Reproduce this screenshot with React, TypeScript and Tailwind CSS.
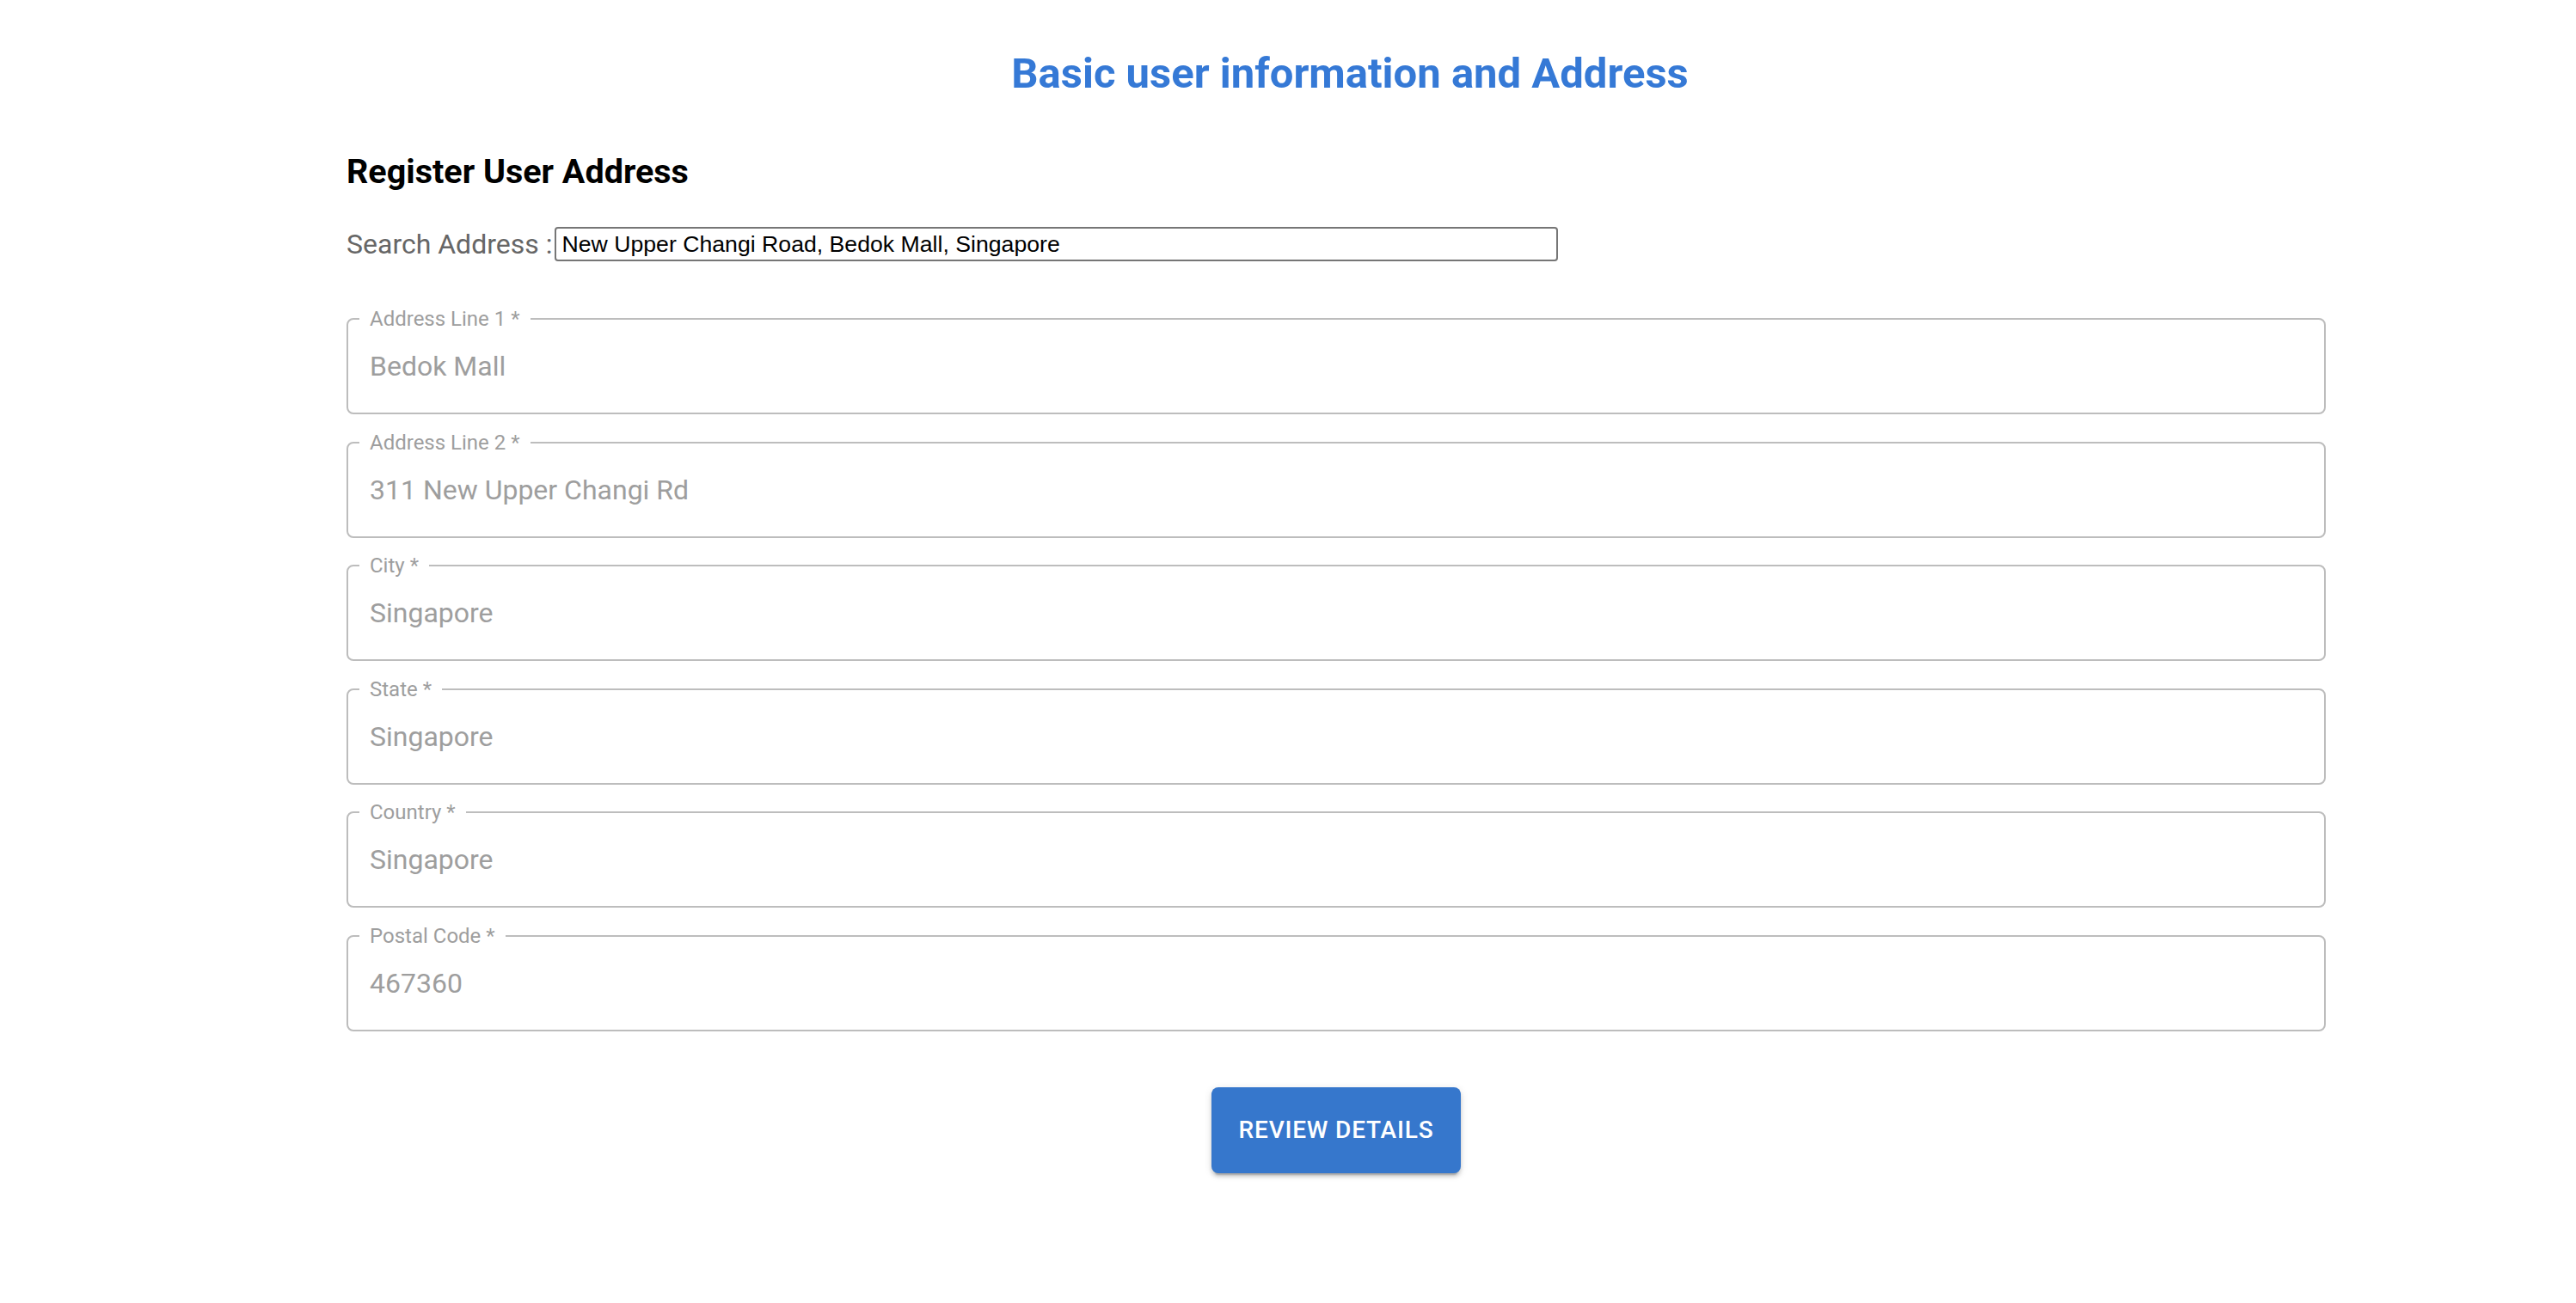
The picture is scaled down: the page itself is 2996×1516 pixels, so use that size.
import React, { useState } from "react";

interface AddressField {
  label: string;
  value: string;
}

const fields: AddressField[] = [
  { label: "Address Line 1", value: "Bedok Mall" },
  { label: "Address Line 2", value: "311 New Upper Changi Rd" },
  { label: "City", value: "Singapore" },
  { label: "State", value: "Singapore" },
  { label: "Country", value: "Singapore" },
  { label: "Postal Code", value: "467360" },
];

function OutlinedField({ label, value }: Readonly<AddressField>) {
  return (
    <div className="relative h-[112px] w-full rounded-[8px] border-2 border-[#bdbdbd] flex items-center pl-[25px] pr-[26px]">
      {/* Floating label sits on the border */}
      <span className="absolute left-[13px] top-[-13px] bg-white px-[12px] text-[24px] leading-[24px] text-[#9e9e9e] font-['Roboto',sans-serif] whitespace-nowrap">
        {label} *
      </span>
      <input
        disabled
        value={value}
        readOnly
        className="w-full bg-transparent outline-none text-[32px] leading-[46px] h-[46px] text-[#9e9e9e] font-['Roboto',sans-serif]"
      />
    </div>
  );
}

export default function App() {
  const [search, setSearch] = useState(
    "New Upper Changi Road, Bedok Mall, Singapore"
  );

  return (
    <div className="min-h-screen w-full bg-white pl-[403px] pr-[291px] pt-[57px] pb-[150px] font-['Roboto',sans-serif]">
      {/* Page title */}
      <div className="pl-[32px] text-center">
        <h2 className="text-[49px] leading-[58px] font-bold text-[#3579d6]">
          Basic user information and Address
        </h2>
      </div>

      <h3 className="mt-[61px] text-[39.5px] leading-[48px] font-bold text-black">
        Register User Address
      </h3>

      {/* Search */}
      <div className="mt-[40px] flex items-center h-[40px]">
        <span className="text-[32px] leading-[40px] text-[#666666] whitespace-pre">
          Search Address :
        </span>
        <input
          value={search}
          onChange={(e) => setSearch(e.target.value)}
          className="ml-[3px] w-[1167px] h-[40px] border-2 border-[#767676] rounded-[4px] px-[6px] text-[26.67px] text-black font-['Liberation_Sans',Arial,sans-serif] outline-none"
        />
      </div>

      {/* Address fields */}
      <div className="mt-[66px] flex flex-col gap-[31.5px]">
        {fields.map((f) => (
          <OutlinedField key={f.label} label={f.label} value={f.value} />
        ))}
      </div>

      <div className="mt-[65px] flex justify-center">
        <button className="w-[290px] h-[100px] rounded-[8px] bg-[#3677cc] text-white text-[28px] font-medium uppercase tracking-[0.8px] shadow-[0_6px_2px_-4px_rgba(0,0,0,0.2),0_4px_4px_0_rgba(0,0,0,0.14),0_2px_10px_0_rgba(0,0,0,0.12)]">
          Review Details
        </button>
      </div>
    </div>
  );
}
